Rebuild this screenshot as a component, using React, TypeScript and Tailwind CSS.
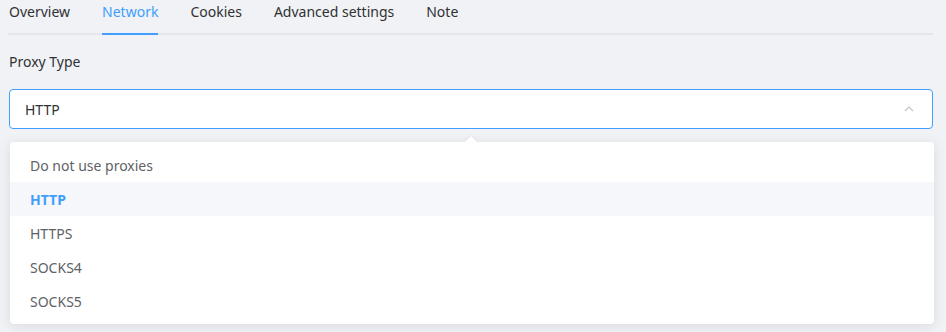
import React from "react";

export default function App() {
  const tabs = ["Overview", "Network", "Cookies", "Advanced settings", "Note"];
  const items = ["Do not use proxies", "HTTP", "HTTPS", "SOCKS4", "SOCKS5"];
  return (
    <div
      className="w-[946px] h-[332px] bg-[#f0f2f5] overflow-hidden"
      style={{ fontFamily: '"Noto Sans", "Open Sans", sans-serif' }}
    >
      <div className="ml-2 w-[925px]">
        <div className="flex border-b-2 border-[#e4e7ed]">
          {tabs.map((t, i) => (
            <div
              key={t}
              className={
                "-mb-[2px] pt-[2px] pb-[11px] text-[14px] leading-5 border-b-2 " +
                (i === 0 ? "ml-px mr-4 " : i === tabs.length - 1 ? "ml-4 " : "mx-4 ") +
                (t === "Network"
                  ? "text-[#409eff] border-[#409eff]"
                  : "text-[#303133] border-transparent")
              }
            >
              {t}
            </div>
          ))}
        </div>
        <div className="mt-[17px] ml-px text-[14px] leading-5 text-[#303133]">Proxy Type</div>
        <div className="mt-[17px] ml-px h-10 w-[924px] rounded-[4px] border border-[#409eff] bg-white flex items-center pl-[15px] pr-[17px]">
          <span className="flex-1 text-[14px] text-[#303133]">HTTP</span>
          <svg width="12" height="12" viewBox="0 0 12 12" fill="none">
            <path d="M2 8 L6 4 L10 8" stroke="#c0c4cc" strokeWidth="1.2" />
          </svg>
        </div>
        <div className="relative mt-[13px] ml-[2px] w-[924px] bg-white rounded-[4px] shadow-[0_2px_12px_0_rgba(0,0,0,0.1)] py-[6px]">
          <div className="absolute -top-[6px] left-[455px] w-0 h-0 border-x-[6px] border-x-transparent border-b-[6px] border-b-white drop-shadow-[0_-1px_1px_rgba(0,0,0,0.05)]" />
          {items.map((it) => (
            <div
              key={it}
              className={
                "h-[34px] flex items-center pl-5 text-[14px] " +
                (it === "HTTP"
                  ? "bg-[#f5f7fa] text-[#409eff] font-bold"
                  : "text-[#606266]")
              }
            >
              {it}
            </div>
          ))}
        </div>
      </div>
    </div>
  );
}
